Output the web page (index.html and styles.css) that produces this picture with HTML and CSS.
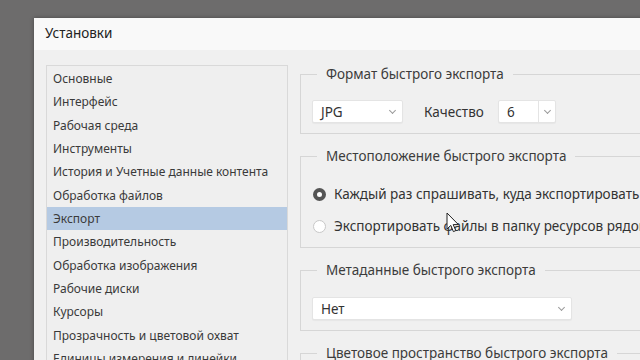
FILE: index.html
```html
<!DOCTYPE html>
<html lang="ru">
<head>
<meta charset="utf-8">
<title>Установки</title>
<link rel="stylesheet" href="styles.css">
</head>
<body>
<div class="desktop">
  <div class="dialog">
    <div class="titlebar">Установки</div>
    <div class="content">
      <ul class="nav">
        <li>Основные</li>
        <li>Интерфейс</li>
        <li>Рабочая среда</li>
        <li>Инструменты</li>
        <li>История и Учетные данные контента</li>
        <li>Обработка файлов</li>
        <li class="active">Экспорт</li>
        <li>Производительность</li>
        <li>Обработка изображения</li>
        <li>Рабочие диски</li>
        <li>Курсоры</li>
        <li>Прозрачность и цветовой охват</li>
        <li>Единицы измерения и линейки</li>
      </ul>
      <div class="groups">
        <fieldset class="group g-format">
          <legend>Формат быстрого экспорта</legend>
          <div class="row">
            <div class="select sel-format"><span>JPG</span><span class="chev"></span></div>
            <span class="label">Качество</span>
            <div class="select sel-quality"><span class="val">6</span><span class="btn"><span class="chev"></span></span></div>
          </div>
        </fieldset>
        <fieldset class="group g-location">
          <legend>Местоположение быстрого экспорта</legend>
          <label class="radio"><span class="dot on"></span><span>Каждый раз спрашивать, куда экспортировать</span></label>
          <label class="radio"><span class="dot"></span><span>Экспортировать файлы в папку ресурсов рядом с текущим документом</span></label>
        </fieldset>
        <fieldset class="group g-meta">
          <legend>Метаданные быстрого экспорта</legend>
          <div class="select sel-meta"><span>Нет</span><span class="chev"></span></div>
        </fieldset>
        <fieldset class="group g-color">
          <legend>Цветовое пространство быстрого экспорта</legend>
          <div class="spacer"></div>
        </fieldset>
      </div>
    </div>
  </div>
  <svg class="cursor" width="14" height="22" viewBox="0 0 14 22"><path d="M1 1 L1 17 L4.8 13.4 L7.4 19.6 L9.8 18.6 L7.2 12.6 L12.4 12.6 Z" fill="#fff" stroke="#222" stroke-width="1" stroke-linejoin="round"/></svg>
</div>
</body>
</html>
```
FILE: styles.css
```css
* { box-sizing: border-box; }
html, body { margin: 0; padding: 0; }
body {
  width: 640px;
  height: 360px;
  overflow: hidden;
  font-family: "Noto Sans", "DejaVu Sans", sans-serif;
  color: #333;
}
.desktop {
  position: relative;
  width: 640px;
  height: 360px;
  background: #6d6c6c;
  padding: 18px 0 0 34px;
  overflow: hidden;
}
.dialog {
  width: 700px;
  height: 400px;
  background: #f0f0f0;
  box-shadow: 0 0 4px rgba(0,0,0,0.35);
}
.titlebar {
  height: 32px;
  background: #f9f9f9;
  padding: 6px 0 0 11px;
  font-size: 13.5px;
  color: #222;
}
.content {
  display: flex;
  padding: 15px 0 0 12px;
  gap: 12px;
  align-items: flex-start;
}
.nav {
  list-style: none;
  margin: 0;
  padding: 1px 0 0 0;
  width: 242px;
  height: 320px;
  border: 1px solid #d9d9d9;
  background: #efefef;
  font-size: 12px;
  color: #3a3a3a;
}
.nav li {
  height: 23.35px;
  line-height: 23px;
  padding-left: 6px;
  white-space: nowrap;
}
.nav li.active { background: #b5cae3; }
.groups {
  width: 420px;
  display: flex;
  flex-direction: column;
  gap: 13px;
}
.group {
  margin: 0;
  border: 1px solid #d6d6d6;
  padding: 0 11px;
  min-width: 0;
  font-size: 13.5px;
}
.group legend {
  margin-left: 5px;
  padding: 0 9px;
  height: 18px;
  line-height: 18px;
  color: #3c3c3c;
}
.g-format { padding-top: 17px; padding-bottom: 10px; }
.row { display: flex; align-items: center; }
.select {
  background: #fff;
  border: 1px solid #e4e4e4;
  border-radius: 2px;
  height: 23px;
  display: flex;
  align-items: center;
  justify-content: space-between;
  padding: 0 7px 0 8px;
  color: #333;
  box-shadow: 0 1px 1px rgba(0,0,0,0.04);
}
.chev {
  width: 5px;
  height: 5px;
  border-right: 1px solid #9a9a9a;
  border-bottom: 1px solid #9a9a9a;
  transform: rotate(45deg);
  margin-top: -3px;
}
.sel-format { width: 91px; }
.label { margin-left: 21px; width: 74px; }
.sel-quality { width: 58px; padding: 0; }
.sel-quality .val { padding-left: 8px; }
.sel-quality .btn {
  width: 17px;
  height: 100%;
  border-left: 1px solid #e4e4e4;
  display: flex;
  align-items: center;
  justify-content: center;
}
.g-location { padding-top: 17px; padding-bottom: 9px; }
.radio {
  display: flex;
  align-items: center;
  height: 24px;
  margin-left: 1px;
  white-space: nowrap;
  color: #333;
}
.radio + .radio { margin-top: 8px; }
.dot {
  width: 13px;
  height: 13px;
  border-radius: 50%;
  border: 1px solid #c8c8c8;
  background: #fff;
  margin-right: 8px;
  flex: none;
}
.dot.on {
  border: 4px solid #555;
  background: #fff;
}
.g-meta { padding-top: 18px; padding-bottom: 10px; }
.sel-meta { width: 260px; }
.g-color { padding-top: 10px; }
.spacer { height: 30px; }
.cursor {
  position: absolute;
  left: 446px;
  top: 212px;
}
```
